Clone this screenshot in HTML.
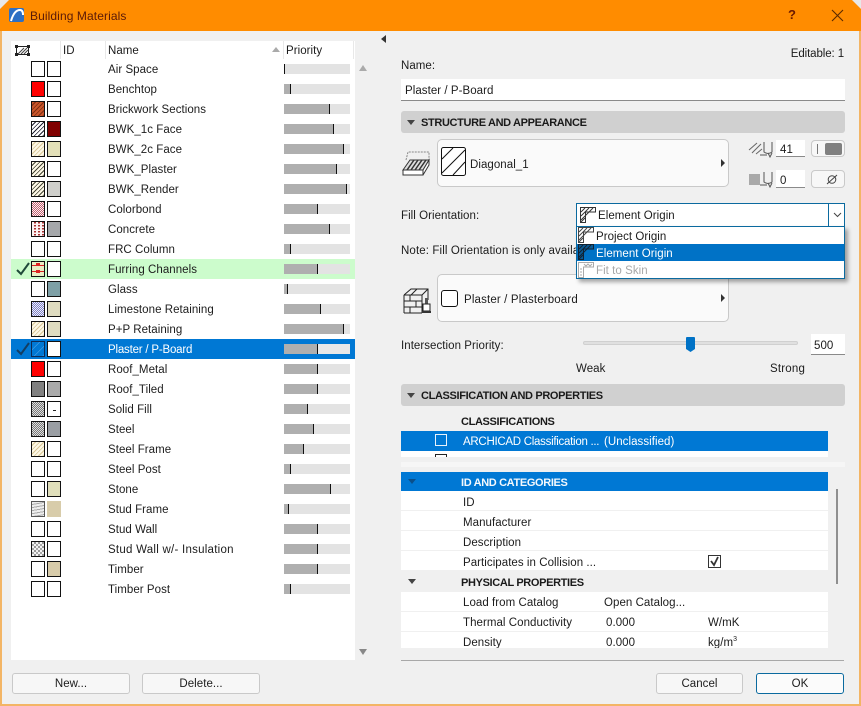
<!DOCTYPE html>
<html><head><meta charset="utf-8"><style>
html,body{margin:0;padding:0}
#w{position:relative;width:861px;height:706px;background:#f0f0f0;overflow:hidden;font:11.5px/14px "Liberation Sans",sans-serif;letter-spacing:.05px;color:#1c1c1c}
#w div,#w span,#w i,#w b{position:absolute;display:block;white-space:nowrap;font-style:normal;box-sizing:border-box}
#w span{transform:translateY(1px)}
.bd{font-weight:700!important;font-size:11px;letter-spacing:-.35px!important;color:#1a1a1a}
.r{left:11px;width:344px;height:20px}
.r span{left:97px;top:3px}
.s{top:2px;width:14px;height:16px;border:1px solid #111;background:#fff}
.a{left:20px}.b{left:36px}
.p{left:273px;top:5px;width:66px;height:10px;background:#e3e3e3}
.p i{left:0;top:0;height:10px;background:#afafaf;border-right:1px solid #111}
.h1{background-image:repeating-linear-gradient(135deg,#fff 0 2px,#223 2px 3px)}
.h2{background-image:repeating-linear-gradient(135deg,#fdf8e6 0 2px,#d8c594 2px 3px)}
.h3{background-image:repeating-linear-gradient(135deg,#fdf8e6 0 2px,#443 2px 3px)}
.h4{background-image:repeating-linear-gradient(135deg,#c9562b 0 2px,#7c2c10 2px 3px)}
.d1{background:conic-gradient(#c06070 25%,#fdf0f2 0 50%,#c06070 0 75%,#fdf0f2 0) 0 0/2px 2px}
.d2{background:conic-gradient(#777 25%,#ddd 0 50%,#777 0 75%,#ddd 0) 0 0/2px 2px}
.d3{background:conic-gradient(#7f81c6 25%,#eeeffb 0 50%,#7f81c6 0 75%,#eeeffb 0) 0 0/2px 2px}
.d4{background:conic-gradient(#a33 25%,#fdf3f3 0) 0 0/4px 3px}
.d5{background-image:repeating-linear-gradient(170deg,#eee 0 2px,#aaa 2px 3px)}
.d6{background:conic-gradient(#999 25%,#f2f2f2 0 50%,#aaa 0 75%,#f2f2f2 0) 0 0/4px 4px}
.btn{background:#f7f7f7;border:1px solid #c9c9c9;border-radius:3px;text-align:center;line-height:21px}
.sec{left:401px;width:444px;height:22px;background:#d0d0d0;border-radius:3px}
.sec span{left:20px;top:4px}
.tri{width:0;height:0;border-left:4px solid transparent;border-right:4px solid transparent;border-top:5px solid #444}
.bar{left:401px;width:427px;height:20px;background:#fff;border-bottom:1px solid #f0f0f0}
.bar span{top:4px}
.inp{background:#fff;border-bottom:1px solid #8a8a8a}
</style></head><body><div id="w">

<!-- title bar -->
<div style="left:0;top:0;width:861px;height:31px;background:#ff8c00;border-radius:8px 8px 0 0"></div>
<div style="left:0;top:0;width:9px;height:9px;background:#e8e8e8;clip-path:polygon(0 0,100% 0,0 100%)"></div>
<div style="left:852px;top:0;width:9px;height:9px;background:#e8e8e8;clip-path:polygon(0 0,100% 0,100% 100%)"></div>
<svg style="position:absolute;left:9px;top:8px" width="16" height="15"><rect width="15" height="14" rx="2" fill="#2d6fc4"/><path d="M2 13C4 6 7 2 11 2C13 2 14 4 14 7" stroke="#fff" stroke-width="2" fill="none"/></svg>
<span style="left:30px;top:9px;font-size:12px;color:#5a1a08;letter-spacing:.1px;transform:none">Building Materials</span>
<span style="left:788px;top:8px;font-size:13px;font-weight:700;color:#6a1a00;transform:none">?</span>
<svg style="position:absolute;left:831px;top:9px" width="13" height="13"><path d="M1 1L12 12M12 1L1 12" stroke="#5a2a00" stroke-width="1.1"/></svg>
<div style="left:0;top:31px;width:2px;height:675px;background:#f3b565"></div>
<div style="left:859px;top:31px;width:2px;height:675px;background:#f3b565"></div>
<div style="left:0;top:704px;width:861px;height:2px;background:#f3b565"></div>

<!-- list -->
<div style="left:11px;top:41px;width:344px;height:619px;background:#fff"></div>
<div style="left:60px;top:41px;width:1px;height:18px;background:#e8e8e8"></div>
<div style="left:105px;top:41px;width:1px;height:18px;background:#e8e8e8"></div>
<div style="left:283px;top:41px;width:1px;height:18px;background:#e8e8e8"></div>
<div style="left:353px;top:41px;width:1px;height:18px;background:#e8e8e8"></div>
<svg style="position:absolute;left:15px;top:45px" width="15" height="11"><rect x="1.5" y="1.5" width="12" height="8" fill="#fff" stroke="#222"/><path d="M3 9L9 3M6 9L12 3M9 9L13 5" stroke="#444"/><path d="M0 0h3v3h-3zM12 0h3v3h-3zM0 8h3v3h-3zM12 8h3v3h-3z" fill="#222"/></svg>
<span style="left:63px;top:43px">ID</span>
<span style="left:108px;top:43px">Name</span>
<div style="left:272px;top:47px;width:0;height:0;border-left:4px solid transparent;border-right:4px solid transparent;border-bottom:5px solid #aaa"></div>
<span style="left:286px;top:43px">Priority</span>
<div style="left:359px;top:65px;width:0;height:0;border-left:4px solid transparent;border-right:4px solid transparent;border-bottom:6px solid #aaa"></div>
<div style="left:359px;top:649px;width:0;height:0;border-left:4px solid transparent;border-right:4px solid transparent;border-top:6px solid #888"></div>

<div class="r" style="top:59px"><i class="s a"></i><i class="s b"></i><span>Air Space</span><b class="p"><i style="width:1px"></i></b></div>
<div class="r" style="top:79px"><i class="s a" style="background:#f00"></i><i class="s b"></i><span>Benchtop</span><b class="p"><i style="width:7px"></i></b></div>
<div class="r" style="top:99px"><i class="s a h4"></i><i class="s b"></i><span>Brickwork Sections</span><b class="p"><i style="width:46px"></i></b></div>
<div class="r" style="top:119px"><i class="s a h1"></i><i class="s b" style="background:#800000"></i><span>BWK_1c Face</span><b class="p"><i style="width:50px"></i></b></div>
<div class="r" style="top:139px"><i class="s a h2"></i><i class="s b" style="background:#e3e0b8"></i><span>BWK_2c Face</span><b class="p"><i style="width:60px"></i></b></div>
<div class="r" style="top:159px"><i class="s a h3"></i><i class="s b"></i><span>BWK_Plaster</span><b class="p"><i style="width:53px"></i></b></div>
<div class="r" style="top:179px"><i class="s a h3"></i><i class="s b" style="background:#cfcfcb"></i><span>BWK_Render</span><b class="p"><i style="width:63px"></i></b></div>
<div class="r" style="top:199px"><i class="s a d1"></i><i class="s b"></i><span>Colorbond</span><b class="p"><i style="width:34px"></i></b></div>
<div class="r" style="top:219px"><i class="s a d4"></i><i class="s b" style="background:#a5a7aa"></i><span>Concrete</span><b class="p"><i style="width:46px"></i></b></div>
<div class="r" style="top:239px"><i class="s a"></i><i class="s b"></i><span>FRC Column</span><b class="p"><i style="width:7px"></i></b></div>
<div class="r" style="top:259px;background:#ccfccc"><svg style="position:absolute;left:5px;top:3px" width="14" height="14"><path d="M1 8L5 12L13 1" stroke="#1f4a3a" stroke-width="2" fill="none"/></svg><i class="s a" style="background:#e9edc4"><svg style="position:absolute;left:0;top:0" width="12" height="14"><path d="M0 3.500H12M0 9.500H12" stroke="#d22" stroke-width="1"/><path d="M4 1h4v2h-4zM4 8h4v3h-4z" fill="#d22"/></svg></i><i class="s b"></i><span>Furring Channels</span><b class="p"><i style="width:34px"></i></b></div>
<div class="r" style="top:279px"><i class="s a"></i><i class="s b" style="background:#7ea0a6"></i><span>Glass</span><b class="p"><i style="width:4px"></i></b></div>
<div class="r" style="top:299px"><i class="s a d3"></i><i class="s b" style="background:#dfdcc0"></i><span>Limestone Retaining</span><b class="p"><i style="width:37px"></i></b></div>
<div class="r" style="top:319px"><i class="s a h2"></i><i class="s b" style="background:#dfdcc0"></i><span>P+P Retaining</span><b class="p"><i style="width:60px"></i></b></div>
<div class="r" style="top:339px;background:#0078d4"><svg style="position:absolute;left:5px;top:3px" width="14" height="14"><path d="M1 8L5 12L13 1" stroke="#123e63" stroke-width="2" fill="none"/></svg><i class="s a" style="background:repeating-linear-gradient(135deg,#0078d4 0 5px,#3f9ae0 5px 6px);border-color:#0b2a55"></i><i class="s b"></i><span style="color:#fff;letter-spacing:-.2px">Plaster / P-Board</span><b class="p" style="background:#e8e8e8"><i style="width:34px"></i></b></div>
<div class="r" style="top:359px"><i class="s a" style="background:#f00"></i><i class="s b"></i><span>Roof_Metal</span><b class="p"><i style="width:34px"></i></b></div>
<div class="r" style="top:379px"><i class="s a" style="background:#808080"></i><i class="s b" style="background:#aaa"></i><span>Roof_Tiled</span><b class="p"><i style="width:34px"></i></b></div>
<div class="r" style="top:399px"><i class="s a d2"></i><i class="s b"><i style="left:5px;top:8px;width:3px;height:1px;background:#222"></i></i><span>Solid Fill</span><b class="p"><i style="width:24px"></i></b></div>
<div class="r" style="top:419px"><i class="s a d2"></i><i class="s b" style="background:#9a9ea3"></i><span>Steel</span><b class="p"><i style="width:30px"></i></b></div>
<div class="r" style="top:439px"><i class="s a h2"></i><i class="s b"></i><span>Steel Frame</span><b class="p"><i style="width:20px"></i></b></div>
<div class="r" style="top:459px"><i class="s a"></i><i class="s b"></i><span>Steel Post</span><b class="p"><i style="width:7px"></i></b></div>
<div class="r" style="top:479px"><i class="s a"></i><i class="s b" style="background:#e0dfbb"></i><span>Stone</span><b class="p"><i style="width:47px"></i></b></div>
<div class="r" style="top:499px"><i class="s a d5" style="border-color:#555"></i><i class="s b" style="background:#d8ccaa;border-color:#d8ccaa"></i><span>Stud Frame</span><b class="p"><i style="width:5px"></i></b></div>
<div class="r" style="top:519px"><i class="s a"></i><i class="s b"></i><span>Stud Wall</span><b class="p"><i style="width:34px"></i></b></div>
<div class="r" style="top:539px"><i class="s a d6"></i><i class="s b"></i><span style="letter-spacing:.25px">Stud Wall w/- Insulation</span><b class="p"><i style="width:34px"></i></b></div>
<div class="r" style="top:559px"><i class="s a"></i><i class="s b" style="background:#d8ccaa"></i><span>Timber</span><b class="p"><i style="width:34px"></i></b></div>
<div class="r" style="top:579px"><i class="s a"></i><i class="s b"></i><span>Timber Post</span><b class="p"><i style="width:7px"></i></b></div>

<div class="btn" style="left:12px;top:673px;width:118px;height:21px">New...</div>
<div class="btn" style="left:142px;top:673px;width:118px;height:21px">Delete...</div>

<div style="left:381px;top:35px;width:0;height:0;border-top:4px solid transparent;border-bottom:4px solid transparent;border-right:5px solid #333"></div>

<!-- right -->
<span style="right:17px;top:46px;letter-spacing:-.1px">Editable: 1</span>
<span style="left:401px;top:58px">Name:</span>
<div class="inp" style="left:401px;top:79px;width:444px;height:22px"></div>
<span style="left:405px;top:83px">Plaster / P-Board</span>

<div class="sec" style="top:111px"><div class="tri" style="left:6px;top:9px"></div><span class="bd">STRUCTURE AND APPEARANCE</span></div>

<svg style="position:absolute;left:402px;top:151px" width="29" height="26"><path d="M4 9L6 1H27V9" stroke="#888" stroke-dasharray="2 1" fill="none"/><path d="M1 19L8 9H27L21 19Z" fill="#ddd" stroke="#333"/><path d="M5 19L12 9M9 19L16 9M13 19L20 9M17 19L24 9" stroke="#333" stroke-width="1.500"/><path d="M1 19H21V24H1ZM21 19L27 9V14L21 24" fill="#fff" stroke="#333"/></svg>
<div class="btn" style="left:437px;top:139px;width:292px;height:48px;background:#fafafa;border-radius:5px"></div>
<svg style="position:absolute;left:441px;top:147px" width="25" height="29"><rect x=".5" y=".5" width="24" height="28" rx="2" fill="#fff" stroke="#111"/><path d="M1 12L12 1M1 26L24 3M12 28L24 15" stroke="#111"/></svg>
<span style="left:470px;top:157px">Diagonal_1</span>
<div style="left:721px;top:159px;width:0;height:0;border-top:4px solid transparent;border-bottom:4px solid transparent;border-left:4px solid #333"></div>

<svg style="position:absolute;left:748px;top:140px" width="28" height="18"><path d="M1 10L9 3M4 13L13 4M8 14L14 9" stroke="#666"/><path d="M16 2V12Q20 15 24 12V2M12 15H19M20 13L22 17L24 13" stroke="#555" fill="none"/></svg>
<div class="inp" style="left:776px;top:140px;width:29px;height:17px"></div>
<span style="left:780px;top:142px">41</span>
<div class="btn" style="left:811px;top:140px;width:34px;height:17px;border-radius:4px"><i style="left:5px;top:3px;width:1px;height:10px;background:#777"></i><i style="left:13px;top:2px;width:17px;height:12px;background:#808080;border-radius:2px"></i></div>
<div style="left:749px;top:174px;width:11px;height:11px;background:#a9a9a9"></div>
<svg style="position:absolute;left:760px;top:170px" width="16" height="18"><path d="M4 2V12Q8 15 12 12V2M0 15H7M8 13L10 17L12 13" stroke="#555" fill="none"/></svg>
<div class="inp" style="left:776px;top:170px;width:29px;height:18px"></div>
<span style="left:780px;top:173px">0</span>
<div class="btn" style="left:811px;top:170px;width:34px;height:18px;border-radius:4px"><svg style="position:absolute;left:14px;top:3px" width="12" height="11"><circle cx="6" cy="5.500" r="3.800" fill="none" stroke="#444"/><path d="M1 10L11 1" stroke="#444"/></svg></div>

<span style="left:401px;top:208px">Fill Orientation:</span>
<div style="left:576px;top:203px;width:269px;height:24px;background:#fff;border:1px solid #0b6a9f"></div>
<div style="left:828px;top:204px;width:1px;height:22px;background:#0b6a9f"></div>
<svg style="position:absolute;left:833px;top:212px" width="10" height="6"><path d="M1 1L4.500 4.500L8 1" stroke="#444" fill="none"/></svg>
<svg style="position:absolute;left:580px;top:207px" width="16" height="16"><path d="M.5 .5H15.500V5H5.500V15.500H.5Z" fill="#fff" stroke="#333"/><path d="M1 5L5 1M1 9L9 1M1 13L13 1M5 11L1 15" stroke="#333"/></svg>
<span style="left:598px;top:208px">Element Origin</span>

<span style="left:401px;top:243px;letter-spacing:.12px">Note: Fill Orientation is only available with certain fills</span>
<div class="btn" style="left:437px;top:274px;width:292px;height:48px;background:#fafafa;border-radius:5px"></div>
<svg style="position:absolute;left:403px;top:284px" width="28" height="30"><path d="M1 11L8 5H25V16M19 29H1Z M1 11V29" fill="none" stroke="#222"/><path d="M1 11H19V29M19 11L25 5M1 17H19M1 23H19M7 11V17M13 17V23M7 23V29M14 5L8 11" stroke="#222" fill="none"/><path d="M22 14h3v6h-3z" fill="#555"/><path d="M20 20h7v7h-7z" fill="#fff" stroke="#222"/><path d="M19 27h9v2h-9z" fill="#333"/></svg>
<div style="left:441px;top:290px;width:17px;height:17px;background:#fff;border:1px solid #111;border-radius:3px"></div>
<span style="left:464px;top:292px;letter-spacing:.15px">Plaster / Plasterboard</span>
<div style="left:721px;top:294px;width:0;height:0;border-top:4px solid transparent;border-bottom:4px solid transparent;border-left:4px solid #333"></div>

<!-- dropdown -->
<div style="left:576px;top:226px;width:269px;height:53px;background:#fff;border:1px solid #0b6a9f;box-shadow:3px 3px 4px rgba(0,0,0,.35)"></div>
<div style="left:577px;top:244px;width:267px;height:17px;background:#0072c6"></div>
<svg style="position:absolute;left:578px;top:227px" width="16" height="16"><path d="M.5 .5H15.500V5H5.500V15.500H.5Z" fill="#fff" stroke="#444"/><path d="M1 5L5 1M1 9L9 1M1 13L13 1M5 11L1 15" stroke="#444"/></svg>
<span style="left:596px;top:229px">Project Origin</span>
<svg style="position:absolute;left:578px;top:244px" width="16" height="16"><path d="M.5 .5H15.500V5H5.500V15.500H.5Z" fill="#0a5a94" stroke="#123"/><path d="M1 5L5 1M1 9L9 1M1 13L13 1M5 11L1 15" stroke="#123"/></svg>
<span style="left:596px;top:246px;color:#fff">Element Origin</span>
<svg style="position:absolute;left:578px;top:262px" width="16" height="16"><path d="M.5 .5H15.500V5H5.500V15.500H.5Z" fill="#fff" stroke="#aaa"/><path d="M6 2L8 4L10 2L12 4L14 2M2 7H4M2 10H4M2 13H4" stroke="#aaa" fill="none"/></svg>
<span style="left:596px;top:263px;color:#a8a8a8">Fit to Skin</span>

<span style="left:401px;top:338px">Intersection Priority:</span>
<div style="left:583px;top:341px;width:215px;height:4px;background:#e0e0e0;border:1px solid #d0d0d0;border-radius:2px"></div>
<svg style="position:absolute;left:686px;top:337px" width="9" height="16"><path d="M0 1Q0 0 1 0H8Q9 0 9 1V12L4.500 15L0 12Z" fill="#0072c6"/></svg>
<div class="inp" style="left:811px;top:334px;width:34px;height:21px"></div>
<span style="left:814px;top:338px">500</span>
<span style="left:576px;top:361px">Weak</span>
<span style="left:770px;top:361px;letter-spacing:.2px">Strong</span>

<div class="sec" style="top:384px"><div class="tri" style="left:6px;top:9px"></div><span class="bd">CLASSIFICATION AND PROPERTIES</span></div>

<span class="bd" style="left:461px;top:414px">CLASSIFICATIONS</span>
<div style="left:401px;top:431px;width:427px;height:20px;background:#0078d4"></div>
<div style="left:435px;top:434px;width:12px;height:12px;border:1px solid #e8f2fb"></div>
<span style="left:463px;top:434px;color:#fff;letter-spacing:-.28px">ARCHICAD Classification ...</span>
<span style="left:604px;top:434px;color:#fff">(Unclassified)</span>
<div style="left:401px;top:451px;width:427px;height:6px;background:#fff"></div>
<div style="left:435px;top:454px;width:12px;height:3px;border:1px solid #222;border-bottom:0"></div>
<div style="left:401px;top:462px;width:444px;height:5px;background:#f6f6f6"></div>

<div style="left:401px;top:472px;width:427px;height:19px;background:#0078d4"></div>
<div class="tri" style="left:408px;top:479px;border-top-color:#0a4f8a"></div>
<span class="bd" style="left:461px;top:475px;color:#f4f8fc">ID AND CATEGORIES</span>
<div class="bar" style="top:491px"><span style="left:62px">ID</span></div>
<div class="bar" style="top:511px"><span style="left:62px">Manufacturer</span></div>
<div class="bar" style="top:531px"><span style="left:62px">Description</span></div>
<div class="bar" style="top:551px"><span style="left:62px">Participates in Collision ...</span></div>
<svg style="position:absolute;left:708px;top:555px" width="13" height="13"><rect x=".5" y=".5" width="12" height="12" fill="#fff" stroke="#333"/><path d="M3 6L6 10L10 2" stroke="#333" stroke-width="1.800" fill="none"/></svg>
<div class="bar" style="top:571px;background:#f0f0f0;height:21px"><span class="bd" style="left:60px;top:4px">PHYSICAL PROPERTIES</span></div>
<div class="tri" style="left:408px;top:579px"></div>
<div class="bar" style="top:592px"><span style="left:62px;top:3px">Load from Catalog</span><span style="left:203px;top:3px">Open Catalog...</span></div>
<div class="bar" style="top:612px"><span style="left:62px;top:3px">Thermal Conductivity</span><span style="left:205px;top:3px">0.000</span><span style="left:307px;top:3px">W/mK</span></div>
<div class="bar" style="top:632px;height:16px;overflow:hidden;border:0"><span style="left:62px;top:3px">Density</span><span style="left:205px;top:3px">0.000</span><span style="left:307px;top:3px">kg/m<sup style="font-size:7px;line-height:0">3</sup></span></div>
<div style="left:836px;top:489px;width:2px;height:95px;background:#8f8f8f"></div>

<div style="left:401px;top:660px;width:443px;height:1px;background:#a8a8a8"></div>
<div class="btn" style="left:656px;top:673px;width:87px;height:21px">Cancel</div>
<div class="btn" style="left:756px;top:673px;width:88px;height:21px;border-color:#0b6a9f;background:#fbfbfb">OK</div>
</div></body></html>
